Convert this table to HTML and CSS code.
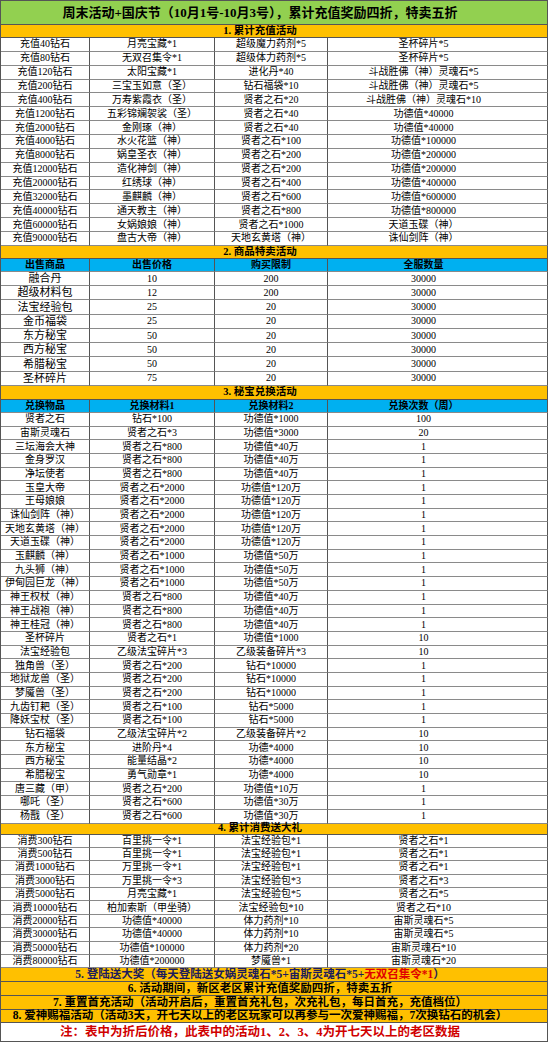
FILE: index.html
```html
<!DOCTYPE html>
<html lang="zh-CN">
<head>
<meta charset="utf-8">
<title>周末活动+国庆节</title>
<link rel="stylesheet" href="styles.css">
</head>
<body>
<div class="sheet">
  <div class="title"><span class="in">周末活动+国庆节（10月1号-10月3号），累计充值奖励四折，特卖五折</span></div>

  <div class="sec s1"><span class="in">1. 累计充值活动</span></div>
  <div class="row r1"><div>充值40钻石</div><div>月亮宝藏*1</div><div>超级魔力药剂*5</div><div>圣杯碎片*5</div></div>
  <div class="row r1"><div>充值80钻石</div><div>无双召集令*1</div><div>超级体力药剂*5</div><div>圣杯碎片*5</div></div>
  <div class="row r1"><div>充值120钻石</div><div>太阳宝藏*1</div><div>进化丹*40</div><div>斗战胜佛（神）灵魂石*5</div></div>
  <div class="row r1"><div>充值200钻石</div><div>三宝玉如意（圣）</div><div>钻石福袋*10</div><div>斗战胜佛（神）灵魂石*5</div></div>
  <div class="row r1"><div>充值400钻石</div><div>万寿紫霞衣（圣）</div><div>贤者之石*20</div><div>斗战胜佛（神）灵魂石*10</div></div>
  <div class="row r1"><div>充值1200钻石</div><div>五彩锦斓袈裟（圣）</div><div>贤者之石*40</div><div>功德值*40000</div></div>
  <div class="row r1"><div>充值2000钻石</div><div>金刚琢（神）</div><div>贤者之石*40</div><div>功德值*40000</div></div>
  <div class="row r1"><div>充值4000钻石</div><div>水火花篮（神）</div><div>贤者之石*100</div><div>功德值*100000</div></div>
  <div class="row r1"><div>充值8000钻石</div><div>娲皇圣衣（神）</div><div>贤者之石*200</div><div>功德值*200000</div></div>
  <div class="row r1"><div>充值12000钻石</div><div>造化神剑（神）</div><div>贤者之石*200</div><div>功德值*200000</div></div>
  <div class="row r1"><div>充值20000钻石</div><div>红绣球（神）</div><div>贤者之石*400</div><div>功德值*400000</div></div>
  <div class="row r1"><div>充值32000钻石</div><div>墨麒麟（神）</div><div>贤者之石*600</div><div>功德值*600000</div></div>
  <div class="row r1"><div>充值40000钻石</div><div>通天教主（神）</div><div>贤者之石*800</div><div>功德值*800000</div></div>
  <div class="row r1"><div>充值60000钻石</div><div>女娲娘娘（神）</div><div>贤者之石*1000</div><div>天道玉碟（神）</div></div>
  <div class="row r1"><div>充值90000钻石</div><div>盘古大帝（神）</div><div>天地玄黄塔（神）</div><div>诛仙剑阵（神）</div></div>

  <div class="sec s2"><span class="in">2. 商品特卖活动</span></div>
  <div class="row hd"><div>出售商品</div><div>出售价格</div><div>购买限制</div><div>全服数量</div></div>
  <div class="row r2"><div>融合丹</div><div>10</div><div>200</div><div>30000</div></div>
  <div class="row r2"><div>超级材料包</div><div>12</div><div>200</div><div>30000</div></div>
  <div class="row r2"><div>法宝经验包</div><div>25</div><div>20</div><div>30000</div></div>
  <div class="row r2"><div>金币福袋</div><div>25</div><div>20</div><div>30000</div></div>
  <div class="row r2"><div>东方秘宝</div><div>50</div><div>20</div><div>30000</div></div>
  <div class="row r2"><div>西方秘宝</div><div>50</div><div>20</div><div>30000</div></div>
  <div class="row r2"><div>希腊秘宝</div><div>50</div><div>20</div><div>30000</div></div>
  <div class="row r2"><div>圣杯碎片</div><div>75</div><div>20</div><div>30000</div></div>

  <div class="sec s3"><span class="in">3. 秘宝兑换活动</span></div>
  <div class="row hd"><div>兑换物品</div><div>兑换材料1</div><div>兑换材料2</div><div>兑换次数（周）</div></div>
  <div class="row r3"><div>贤者之石</div><div>钻石*100</div><div>功德值*1000</div><div>100</div></div>
  <div class="row r3"><div>宙斯灵魂石</div><div>贤者之石*3</div><div>功德值*3000</div><div>20</div></div>
  <div class="row r3"><div>三坛海会大神</div><div>贤者之石*800</div><div>功德值*40万</div><div>1</div></div>
  <div class="row r3"><div>金身罗汉</div><div>贤者之石*800</div><div>功德值*40万</div><div>1</div></div>
  <div class="row r3"><div>净坛使者</div><div>贤者之石*800</div><div>功德值*40万</div><div>1</div></div>
  <div class="row r3"><div>玉皇大帝</div><div>贤者之石*2000</div><div>功德值*120万</div><div>1</div></div>
  <div class="row r3"><div>王母娘娘</div><div>贤者之石*2000</div><div>功德值*120万</div><div>1</div></div>
  <div class="row r3"><div>诛仙剑阵（神）</div><div>贤者之石*2000</div><div>功德值*120万</div><div>1</div></div>
  <div class="row r3"><div>天地玄黄塔（神）</div><div>贤者之石*2000</div><div>功德值*120万</div><div>1</div></div>
  <div class="row r3"><div>天道玉碟（神）</div><div>贤者之石*2000</div><div>功德值*120万</div><div>1</div></div>
  <div class="row r3"><div>玉麒麟（神）</div><div>贤者之石*1000</div><div>功德值*50万</div><div>1</div></div>
  <div class="row r3"><div>九头狮（神）</div><div>贤者之石*1000</div><div>功德值*50万</div><div>1</div></div>
  <div class="row r3"><div>伊甸园巨龙（神）</div><div>贤者之石*1000</div><div>功德值*50万</div><div>1</div></div>
  <div class="row r3"><div>神王权杖（神）</div><div>贤者之石*800</div><div>功德值*40万</div><div>1</div></div>
  <div class="row r3"><div>神王战袍（神）</div><div>贤者之石*800</div><div>功德值*40万</div><div>1</div></div>
  <div class="row r3"><div>神王桂冠（神）</div><div>贤者之石*800</div><div>功德值*40万</div><div>1</div></div>
  <div class="row r3"><div>圣杯碎片</div><div>贤者之石*1</div><div>功德值*1000</div><div>10</div></div>
  <div class="row r3"><div>法宝经验包</div><div>乙级法宝碎片*3</div><div>乙级装备碎片*3</div><div>10</div></div>
  <div class="row r3"><div>独角兽（圣）</div><div>贤者之石*200</div><div>钻石*10000</div><div>1</div></div>
  <div class="row r3"><div>地狱龙兽（圣）</div><div>贤者之石*200</div><div>钻石*10000</div><div>1</div></div>
  <div class="row r3"><div>梦魇兽（圣）</div><div>贤者之石*200</div><div>钻石*10000</div><div>1</div></div>
  <div class="row r3"><div>九齿钉耙（圣）</div><div>贤者之石*100</div><div>钻石*5000</div><div>1</div></div>
  <div class="row r3"><div>降妖宝杖（圣）</div><div>贤者之石*100</div><div>钻石*5000</div><div>1</div></div>
  <div class="row r3"><div>钻石福袋</div><div>乙级法宝碎片*2</div><div>乙级装备碎片*2</div><div>10</div></div>
  <div class="row r3"><div>东方秘宝</div><div>进阶丹*4</div><div>功德*4000</div><div>10</div></div>
  <div class="row r3"><div>西方秘宝</div><div>能量结晶*2</div><div>功德*4000</div><div>10</div></div>
  <div class="row r3"><div>希腊秘宝</div><div>勇气勋章*1</div><div>功德*4000</div><div>10</div></div>
  <div class="row r3"><div>唐三藏（甲）</div><div>贤者之石*200</div><div>功德值*10万</div><div>1</div></div>
  <div class="row r3"><div>哪吒（圣）</div><div>贤者之石*600</div><div>功德值*30万</div><div>1</div></div>
  <div class="row r3"><div>杨戬（圣）</div><div>贤者之石*600</div><div>功德值*30万</div><div>1</div></div>

  <div class="sec s4"><span class="in">4. 累计消费送大礼</span></div>
  <div class="row r4"><div>消费300钻石</div><div>百里挑一令*1</div><div>法宝经验包*1</div><div>贤者之石*1</div></div>
  <div class="row r4"><div>消费500钻石</div><div>百里挑一令*1</div><div>法宝经验包*1</div><div>贤者之石*1</div></div>
  <div class="row r4"><div>消费1000钻石</div><div>万里挑一令*1</div><div>法宝经验包*1</div><div>贤者之石*1</div></div>
  <div class="row r4"><div>消费3000钻石</div><div>万里挑一令*3</div><div>法宝经验包*3</div><div>贤者之石*3</div></div>
  <div class="row r4"><div>消费5000钻石</div><div>月亮宝藏*1</div><div>法宝经验包*5</div><div>贤者之石*5</div></div>
  <div class="row r4"><div>消费10000钻石</div><div>柏加索斯（甲坐骑）</div><div>法宝经验包*10</div><div>贤者之石*10</div></div>
  <div class="row r4"><div>消费20000钻石</div><div>功德值*40000</div><div>体力药剂*10</div><div>宙斯灵魂石*5</div></div>
  <div class="row r4"><div>消费30000钻石</div><div>功德值*40000</div><div>体力药剂*10</div><div>宙斯灵魂石*5</div></div>
  <div class="row r4"><div>消费50000钻石</div><div>功德值*100000</div><div>体力药剂*20</div><div>宙斯灵魂石*10</div></div>
  <div class="row r4"><div>消费80000钻石</div><div>功德值*200000</div><div>梦魇兽*1</div><div>宙斯灵魂石*20</div></div>

  <div class="ft f5"><span class="in">5. 登陆送大奖（每天登陆送女娲灵魂石*5+宙斯灵魂石*5+<span class="red">无双召集令*1</span>）</span></div>
  <div class="ft f6"><span class="in">6. 活动期间，新区老区累计充值奖励四折，特卖五折</span></div>
  <div class="ft f7"><span class="in">7. 重置首充活动（活动开启后，重置首充礼包，次充礼包，每日首充，充值档位）</span></div>
  <div class="ft f8"><span class="in">8. 爱神赐福活动（活动3天，开七天以上的老区玩家可以再参与一次爱神赐福，7次换钻石的机会）</span></div>
  <div class="note"><span class="in">注：表中为折后价格，此表中的活动1、2、3、4为开七天以上的老区数据</span></div>
</div>
</body>
</html>
```

FILE: styles.css
```css
html, body {
  margin: 0;
  padding: 0;
  background: #ffffff;
}

.sheet {
  width: 548px;
  box-sizing: border-box;
  border-left: 1px solid #555;
  font-family: "Liberation Serif", "Noto Sans CJK SC", serif;
  color: #000;
  font-size: 10px;
  line-height: 1;
}

.title,
.sec,
.ft,
.note {
  box-sizing: border-box;
  display: flex;
  align-items: center;
  justify-content: center;
  padding-right: 28px;
  border-right: 1px solid #555;
  border-bottom: 1px solid #555;
  font-weight: bold;
  white-space: nowrap;
}

.title {
  height: 25px;
  border-top: 1px solid #555;
  background: #92d050;
  font-size: 13px;
}

.sec {
  background: #ffc000;
  font-size: 10.5px;
  height: 13px;
}
.s3 { height: 14px; }
.s4 { height: 11px; }

.row {
  display: grid;
  grid-template-columns: 89px 125px 113px 220px;
}

.row > div {
  box-sizing: border-box;
  display: flex;
  align-items: center;
  justify-content: center;
  border-right: 1px solid #555;
  border-bottom: 1px solid #8a8a8a;
  white-space: nowrap;
  overflow: hidden;
}

.row > div:nth-child(4) {
  padding-right: 28px;
}

.r1 { height: 13.87px; }
.r2 { height: 14.25px; }
.r3 { height: 13.7px; }
.r4 { height: 13.4px; }

.r2 > div:first-child {
  font-size: 11px;
}

.hd {
  height: 13px;
  background: #00b0f0;
  font-weight: bold;
}

.ft {
  height: 13.75px;
  background: #ffc000;
  font-size: 11.5px;
}

.f5 { color: #1c1c5c; }

.red { color: #e00000; }

.note {
  height: 19px;
  background: #ffffff;
  color: #d00000;
  font-size: 12.5px;
}
```
